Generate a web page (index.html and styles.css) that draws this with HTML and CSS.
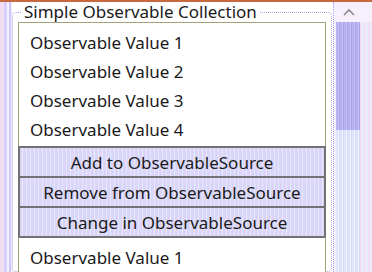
FILE: index.html
```html
<!DOCTYPE html>
<html>
<head>
<meta charset="utf-8">
<link rel="stylesheet" href="styles.css">
</head>
<body>
<div class="topline"></div>
<div class="window">
  <div class="leftstrip"></div>
  <fieldset class="group">
    <legend class="group-title">Simple Observable Collection</legend>
    <ul class="list">
      <li class="item">Observable Value 1</li>
      <li class="item">Observable Value 2</li>
      <li class="item">Observable Value 3</li>
      <li class="item">Observable Value 4</li>
    </ul>
    <button class="btn">Add to ObservableSource</button>
    <button class="btn">Remove from ObservableSource</button>
    <button class="btn">Change in ObservableSource</button>
    <ul class="list">
      <li class="item">Observable Value 1</li>
    </ul>
  </fieldset>
  <div class="scrollbar">
    <div class="sb-up">
      <svg width="12" height="8" viewBox="0 0 12 8"><path d="M1 7 L6 2 L11 7" fill="none" stroke="#8a8a8a" stroke-width="1.6"/></svg>
    </div>
    <div class="sb-body">
      <div class="sb-track">
        <div class="sb-thumb"></div>
        <div class="sb-rest"></div>
      </div>
      <div class="sb-edge"></div>
    </div>
  </div>
</div>
</body>
</html>
```
FILE: styles.css
```css
html, body {
  margin: 0;
  padding: 0;
  width: 372px;
  height: 272px;
  overflow: hidden;
  background: #ffffff;
  font-family: "Noto Sans", "Open Sans", sans-serif;
  color: #1a1a1a;
}
.topline {
  height: 2px;
  background: #c8683e;
}
.window {
  display: flex;
  height: 270px;
  overflow: hidden;
}
.leftstrip {
  width: 12px;
  flex: none;
  background: linear-gradient(to right, #f2dcf2 0 4px, #d6cff8 4px 7px, #f6f2fd 7px 9px, #cdc6f8 9px 11px, #f0ecfc 11px 12px);
}
.group {
  flex: none;
  width: 308px;
  margin: 0;
  padding: 0 5px;
  border: 1px dotted #a9a2f0;
  border-radius: 4px;
  min-width: 0;
}
.group-title {
  margin-left: 4px;
  padding: 0 2px;
  font-size: 17px;
  line-height: 20px;
}
.list {
  list-style: none;
  margin: 0;
  padding: 5px 0 2px 0;
  border: 1px solid #a4a17a;
  border-bottom: none;
  background: #fff;
}
.item {
  height: 29px;
  line-height: 29px;
  padding-left: 11px;
  font-size: 17px;
}
.btn {
  display: block;
  width: 100%;
  height: 30px;
  margin: 0;
  border: 2px solid #727272;
  border-bottom-width: 0;
  background: repeating-linear-gradient(90deg, #dcd5fa 0 2px, #ece4fb 2px 3px, #d3daf9 3px 4px);
  font-family: inherit;
  font-size: 17px;
  color: #1a1a1a;
  padding: 0;
}
.btn + .list {
  border-top: 2px solid #727272;
}
.scrollbar {
  flex: 1;
  display: flex;
  flex-direction: column;
  margin-left: 1px;
  border-left: 1px dotted #a9a2f0;
  background: #f6f0fc;
}
.sb-up {
  height: 20px;
  display: flex;
  justify-content: center;
  align-items: center;
  padding-right: 8px;
}
.sb-body {
  flex: 1;
  display: flex;
}
.sb-track {
  width: 24px;
  margin-left: 2px;
  display: flex;
  flex-direction: column;
}
.sb-thumb {
  height: 108px;
  background: repeating-linear-gradient(90deg, #b8b0f0 0 2px, #c8c0f4 2px 3px, #aaa4ee 3px 4px);
}
.sb-rest {
  flex: 1;
  background: repeating-linear-gradient(90deg, #dfe6fb 0 2px, #eef6fc 2px 3px, #d8d6fa 3px 4px);
}
.sb-edge {
  flex: 1;
  background: repeating-linear-gradient(90deg, #f4def4 0 2px, #e4f4fc 2px 3px, #ece6fb 3px 4px);
}
```
